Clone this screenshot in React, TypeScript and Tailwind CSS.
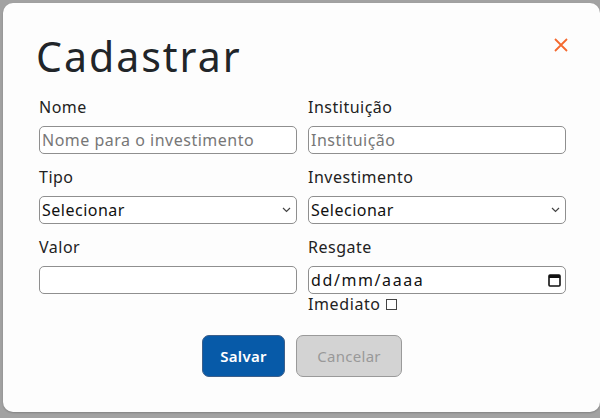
import React from "react";

const Field = ({ label, children }: { label: string; children: React.ReactNode }) => (
  <div className="flex flex-col">
    <label className="mb-[8px] text-[16px] leading-[22px] tracking-[0.5px] text-[#222]">{label}</label>
    {children}
  </div>
);

const inputCls =
  "h-[28px] w-full rounded-[5px] border border-[#8f8f8f] bg-white px-[2px] text-[16px] tracking-[0.5px] text-[#111] placeholder:text-[#777] outline-none";

const Chevron = () => (
  <svg className="pointer-events-none absolute right-[6px] top-[11px]" width="9" height="6" viewBox="0 0 9 6" fill="none">
    <path d="M1 1l3.5 3.5L8 1" stroke="#444" strokeWidth="1.2" />
  </svg>
);

const SelectBox = () => (
  <div className="relative">
    <select className={inputCls + " appearance-none"} defaultValue="">
      <option value="">Selecionar</option>
    </select>
    <Chevron />
  </div>
);

export default function App() {
  return (
    <div
      className="flex h-[418px] w-[600px] overflow-hidden bg-[#a2a2a2] pl-[3px] pt-[3px]"
      style={{ fontFamily: '"Noto Sans", "Open Sans", sans-serif' }}
    >
      <div className="h-[409px] w-[600px] rounded-[10px] bg-[#fdfdfd] pl-[36px] pr-[32px] pt-[25px] shadow-[0_1px_2px_rgba(0,0,0,0.2)]">
        <div className="flex items-start justify-between">
          <h1 className="-ml-[3px] text-[41px] font-normal leading-[56px] tracking-[2px] text-[#212529]">Cadastrar</h1>
          <svg className="mt-[10px]" width="14" height="14" viewBox="0 0 14 14" fill="none">
            <path d="M1 1l12 12M13 1L1 13" stroke="#f4692e" strokeWidth="1.8" />
          </svg>
        </div>

        <div className="mt-[12px] grid w-[527px] grid-cols-2 gap-x-[11px] gap-y-[12px]">
          <Field label="Nome">
            <input className={inputCls} placeholder="Nome para o investimento" />
          </Field>
          <Field label="Instituição">
            <input className={inputCls} placeholder="Instituição" />
          </Field>
          <Field label="Tipo">
            <SelectBox />
          </Field>
          <Field label="Investimento">
            <SelectBox />
          </Field>
          <Field label="Valor">
            <input className={inputCls} />
          </Field>
          <Field label="Resgate">
            <div className={inputCls + " flex items-center justify-between pr-[4px]"}>
              <span className="tracking-[1.6px] text-[#111]">dd/mm/aaaa</span>
              <svg width="13" height="14" viewBox="0 0 13 14" fill="none">
                <rect x="1" y="2" width="11" height="11" rx="1" stroke="#111" strokeWidth="1.6" />
                <rect x="1" y="2" width="11" height="3" fill="#111" />
              </svg>
            </div>
            <div className="-mt-[1px] flex items-center gap-[5px] text-[16px] leading-[22px] tracking-[0.6px] text-[#222]">
              <span>Imediato</span>
              <span className="h-[11px] w-[11px] border border-[#444] bg-white" />
            </div>
          </Field>
        </div>

        <div className="ml-[163px] mt-[20px] flex gap-[11px]">
          <button className="h-[42px] w-[83px] rounded-[7px] border border-[#3d5f8a] bg-[#075aa8] text-[15px] font-semibold tracking-[0.3px] text-white">
            Salvar
          </button>
          <button className="h-[42px] w-[106px] rounded-[7px] border border-[#9a9a9a] bg-[#d3d3d3] text-[15px] tracking-[0.3px] text-[#999]">
            Cancelar
          </button>
        </div>
      </div>
    </div>
  );
}
